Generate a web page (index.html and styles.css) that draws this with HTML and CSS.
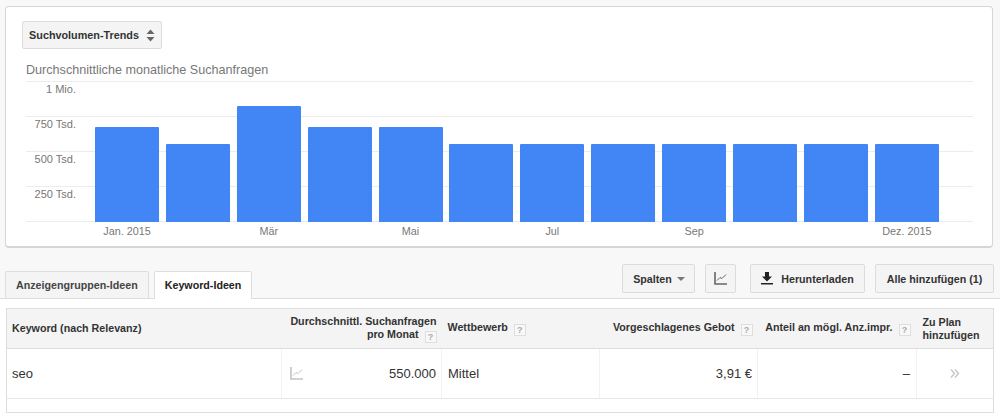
FILE: index.html
```html
<!DOCTYPE html>
<html lang="de">
<head>
	<meta charset="UTF-8">
	<title>Keyword-Ideen</title>
	<link rel="stylesheet" href="styles.css">
</head>
<body>
	<div class="top">
		<div class="card">
			<button class="btn trend_btn" type="button">
				Suchvolumen-Trends
				<svg class="updown" width="9" height="13" viewBox="0 0 9 13"><path d="M4.5 0.5 L8.5 5 L0.5 5 Z M0.5 8 L8.5 8 L4.5 12.5 Z" fill="#666"/></svg>
			</button>
			<p class="chart_title">Durchschnittliche monatliche Suchanfragen</p>
			<div class="plot">
				<div class="axis">
					<span>1 Mio.</span>
					<span>750 Tsd.</span>
					<span>500 Tsd.</span>
					<span>250 Tsd.</span>
				</div>
				<div class="bars">
					<div class="bar" style="height: 95px"></div>
					<div class="bar" style="height: 78px"></div>
					<div class="bar" style="height: 116px"></div>
					<div class="bar" style="height: 95px"></div>
					<div class="bar" style="height: 95px"></div>
					<div class="bar" style="height: 78px"></div>
					<div class="bar" style="height: 78px"></div>
					<div class="bar" style="height: 78px"></div>
					<div class="bar" style="height: 78px"></div>
					<div class="bar" style="height: 78px"></div>
					<div class="bar" style="height: 78px"></div>
					<div class="bar" style="height: 78px"></div>
				</div>
			</div>
			<div class="months">
				<span>Jan. 2015</span><span></span>
				<span>Mär</span><span></span>
				<span>Mai</span><span></span>
				<span>Jul</span><span></span>
				<span>Sep</span><span></span><span></span>
				<span>Dez. 2015</span>
			</div>
		</div>

		<div class="bar_row">
			<div class="tabs">
				<div class="tab">Anzeigengruppen-Ideen</div>
				<div class="tab tab_active">Keyword-Ideen</div>
			</div>
			<div class="tools">
				<button class="btn spalten_btn" type="button">Spalten <span class="caret"></span></button>
				<button class="btn graph_btn" type="button">
					<svg width="13" height="13" viewBox="0 0 13 13" fill="none" stroke="#666"><path d="M1 0 V12 H13" stroke-width="1.6"/><path d="M3 8.5 L6 5.5 L8 6.5 L12 2.5" stroke-width="1"/></svg>
				</button>
				<button class="btn load_btn" type="button">
					<svg width="12" height="13" viewBox="0 0 12 13"><path d="M4 0 H8 V4.5 H11 L6 9.5 L1 4.5 H4 Z M0 11 H12 V12.6 H0 Z" fill="#222"/></svg>
					Herunterladen
				</button>
				<button class="btn add_btn" type="button">Alle hinzufügen (1)</button>
			</div>
		</div>
	</div>

	<div class="bottom">
		<table class="kw_table">
			<colgroup>
				<col class="c1"><col class="c2"><col class="c3"><col class="c4"><col class="c5"><col class="c6"><col>
			</colgroup>
			<thead>
				<tr>
					<th>Keyword (nach Relevanz)</th>
					<th colspan="2" class="right nowrap">Durchschnittl. Suchanfragen<br>pro Monat <span class="help">?</span></th>
					<th class="wide_left">Wettbewerb <span class="help">?</span></th>
					<th class="right">Vorgeschlagenes Gebot <span class="help">?</span></th>
					<th class="right wide_right">Anteil an mögl. Anz.impr. <span class="help">?</span></th>
					<th class="plan">Zu Plan hinzufügen</th>
				</tr>
			</thead>
			<tbody>
				<tr>
					<td>seo</td>
					<td class="spark">
						<svg width="13" height="13" viewBox="0 0 13 13" fill="none" stroke="#c4c4c4"><path d="M1 0 V12 H13" stroke-width="1.6"/><path d="M3 8.5 L6 5.5 L8 6.5 L12 2.5" stroke-width="1"/></svg>
					</td>
					<td class="right">550.000</td>
					<td class="wide_left">Mittel</td>
					<td class="right">3,91 €</td>
					<td class="right wide_right">–</td>
					<td class="add_cell">
						<svg width="10" height="9" viewBox="0 0 10 9" fill="none" stroke="#c4c4c4" stroke-width="1.3"><path d="M1 0.5 L4.5 4.5 L1 8.5 M5 0.5 L8.5 4.5 L5 8.5"/></svg>
					</td>
				</tr>
				<tr class="spacer"><td colspan="7"></td></tr>
			</tbody>
		</table>
	</div>
</body>
</html>
```

FILE: styles.css
```css
body {
	margin: 0;
	background-color: white;
	font-family: "Liberation Sans", Arial, sans-serif;
	color: #333;
	overflow: hidden;
}

.top {
	background-color: #f8f8f8;
	padding: 6px 6px 0 5px;
	border-bottom: 1px solid #ddd;
	height: 292px;
}

.card {
	box-sizing: border-box;
	width: 988px;
	height: 242px;
	padding: 14px 20px 0 16px;
	background-color: white;
	border: 1px solid #d6d6d6;
	border-bottom-width: 2px;
	border-radius: 4px;
}

.btn {
	box-sizing: border-box;
	display: inline-flex;
	align-items: center;
	justify-content: center;
	height: 29px;
	padding: 0;
	background-color: #f4f4f4;
	border: 1px solid #dcdcdc;
	border-radius: 2px;
	font-family: inherit;
	font-size: 10.7px;
	font-weight: bold;
	color: #333;
}

.trend_btn {
	display: flex;
	width: 140px;
	height: 28px;
	gap: 7px;
	font-size: 10.8px;
}

.chart_title {
	margin: 13px 0 0 4px;
	height: 19px;
	font-size: 12.6px;
	line-height: 16px;
	color: #777;
}

.plot {
	display: flex;
	height: 141px;
	width: 947px;
	margin-left: 4px;
	box-sizing: border-box;
	/* one hairline every 35px, the last one is the baseline */
	background-image: repeating-linear-gradient(to bottom, #ececec 0, #ececec 1px, transparent 1px, transparent 35px);
}

.axis {
	width: 50px;
	display: flex;
	flex-direction: column;
	text-align: right;
}

.axis span {
	height: 35px;
	line-height: 16px;
	font-size: 11px;
	color: #777;
}

.bars {
	display: flex;
	align-items: flex-end;
	gap: 6.9px;
	margin-left: 19px;
	height: 141px;
}

.bar {
	width: 64px;
	background-color: #4285f4;
	border-radius: 1px 1px 0 0;
}

.months {
	display: flex;
	gap: 6.9px;
	margin: 1px 0 0 73px;
}

.months span {
	width: 64px;
	white-space: nowrap;
	text-align: center;
	font-size: 10.8px;
	line-height: 16px;
	color: #777;
}

.bar_row {
	display: flex;
	justify-content: space-between;
	align-items: flex-start;
	margin-top: 16px;
	height: 35px;
}

.tabs {
	display: flex;
	gap: 5px;
	margin-top: 7px;
}

.tab {
	box-sizing: border-box;
	height: 27px;
	padding: 0 10px;
	line-height: 26px;
	font-size: 10.7px;
	font-weight: bold;
	color: #444;
	background-color: #f4f4f4;
	border: 1px solid #ddd;
	border-bottom: none;
	border-radius: 2px 2px 0 0;
}

.tab_active {
	height: 28px;
	color: #222;
	background-color: white;
}

.tools {
	display: flex;
}

.spalten_btn {
	width: 73px;
	gap: 5px;
	margin-right: 10px;
	padding-left: 1px;
}

.caret {
	width: 0;
	height: 0;
	border-left: 4px solid transparent;
	border-right: 4px solid transparent;
	border-top: 4px solid #777;
}

.graph_btn {
	width: 31px;
	margin-right: 14px;
}

.load_btn {
	width: 115px;
	gap: 8px;
	margin-right: 10px;
}

.add_btn {
	width: 119px;
}

.bottom {
	padding: 9px 6px 0 6px;
}

.kw_table {
	width: 988px;
	table-layout: fixed;
	border-collapse: collapse;
	border: 1px solid #ddd;
}

.c1 { width: 275px; }
.c2 { width: 40px; }
.c3 { width: 120px; }
.c4 { width: 158px; }
.c5 { width: 158px; }
.c6 { width: 159px; }

.kw_table th {
	height: 39px;
	padding: 0 5px;
	background-color: #f4f4f4;
	border-bottom: 1px solid #ddd;
	font-size: 10.7px;
	line-height: 13px;
	font-weight: bold;
	text-align: left;
	color: #333;
}

.kw_table td {
	height: 49px;
	padding: 0 5px;
	border-bottom: 1px solid #e6e6e6;
	border-right: 1px solid #f2f2f2;
	font-size: 13px;
}

.kw_table th.right, .kw_table td.right {
	text-align: right;
}

.kw_table th.wide_left, .kw_table td.wide_left {
	padding-left: 6px;
}

.kw_table th.wide_right, .kw_table td.wide_right {
	padding-right: 6px;
}

.kw_table th.nowrap {
	white-space: nowrap;
}

.kw_table th.plan {
	padding-left: 6px;
	padding-right: 12px;
}

.kw_table td.spark {
	border-right: none;
	padding-left: 8px;
}

.kw_table td svg {
	display: block;
}

.kw_table td.add_cell {
	border-right: none;
}

.kw_table td.add_cell svg {
	margin: 0 auto;
}

.kw_table .spacer td {
	height: 13px;
	padding: 0;
	border: none;
}

.help {
	display: inline-block;
	box-sizing: border-box;
	width: 12px;
	height: 12px;
	margin-left: 3px;
	background-color: #f8f8f8;
	border: 1px solid #dedede;
	font-size: 9px;
	line-height: 10px;
	text-align: center;
	color: #aaa;
	vertical-align: -2px;
}
```
